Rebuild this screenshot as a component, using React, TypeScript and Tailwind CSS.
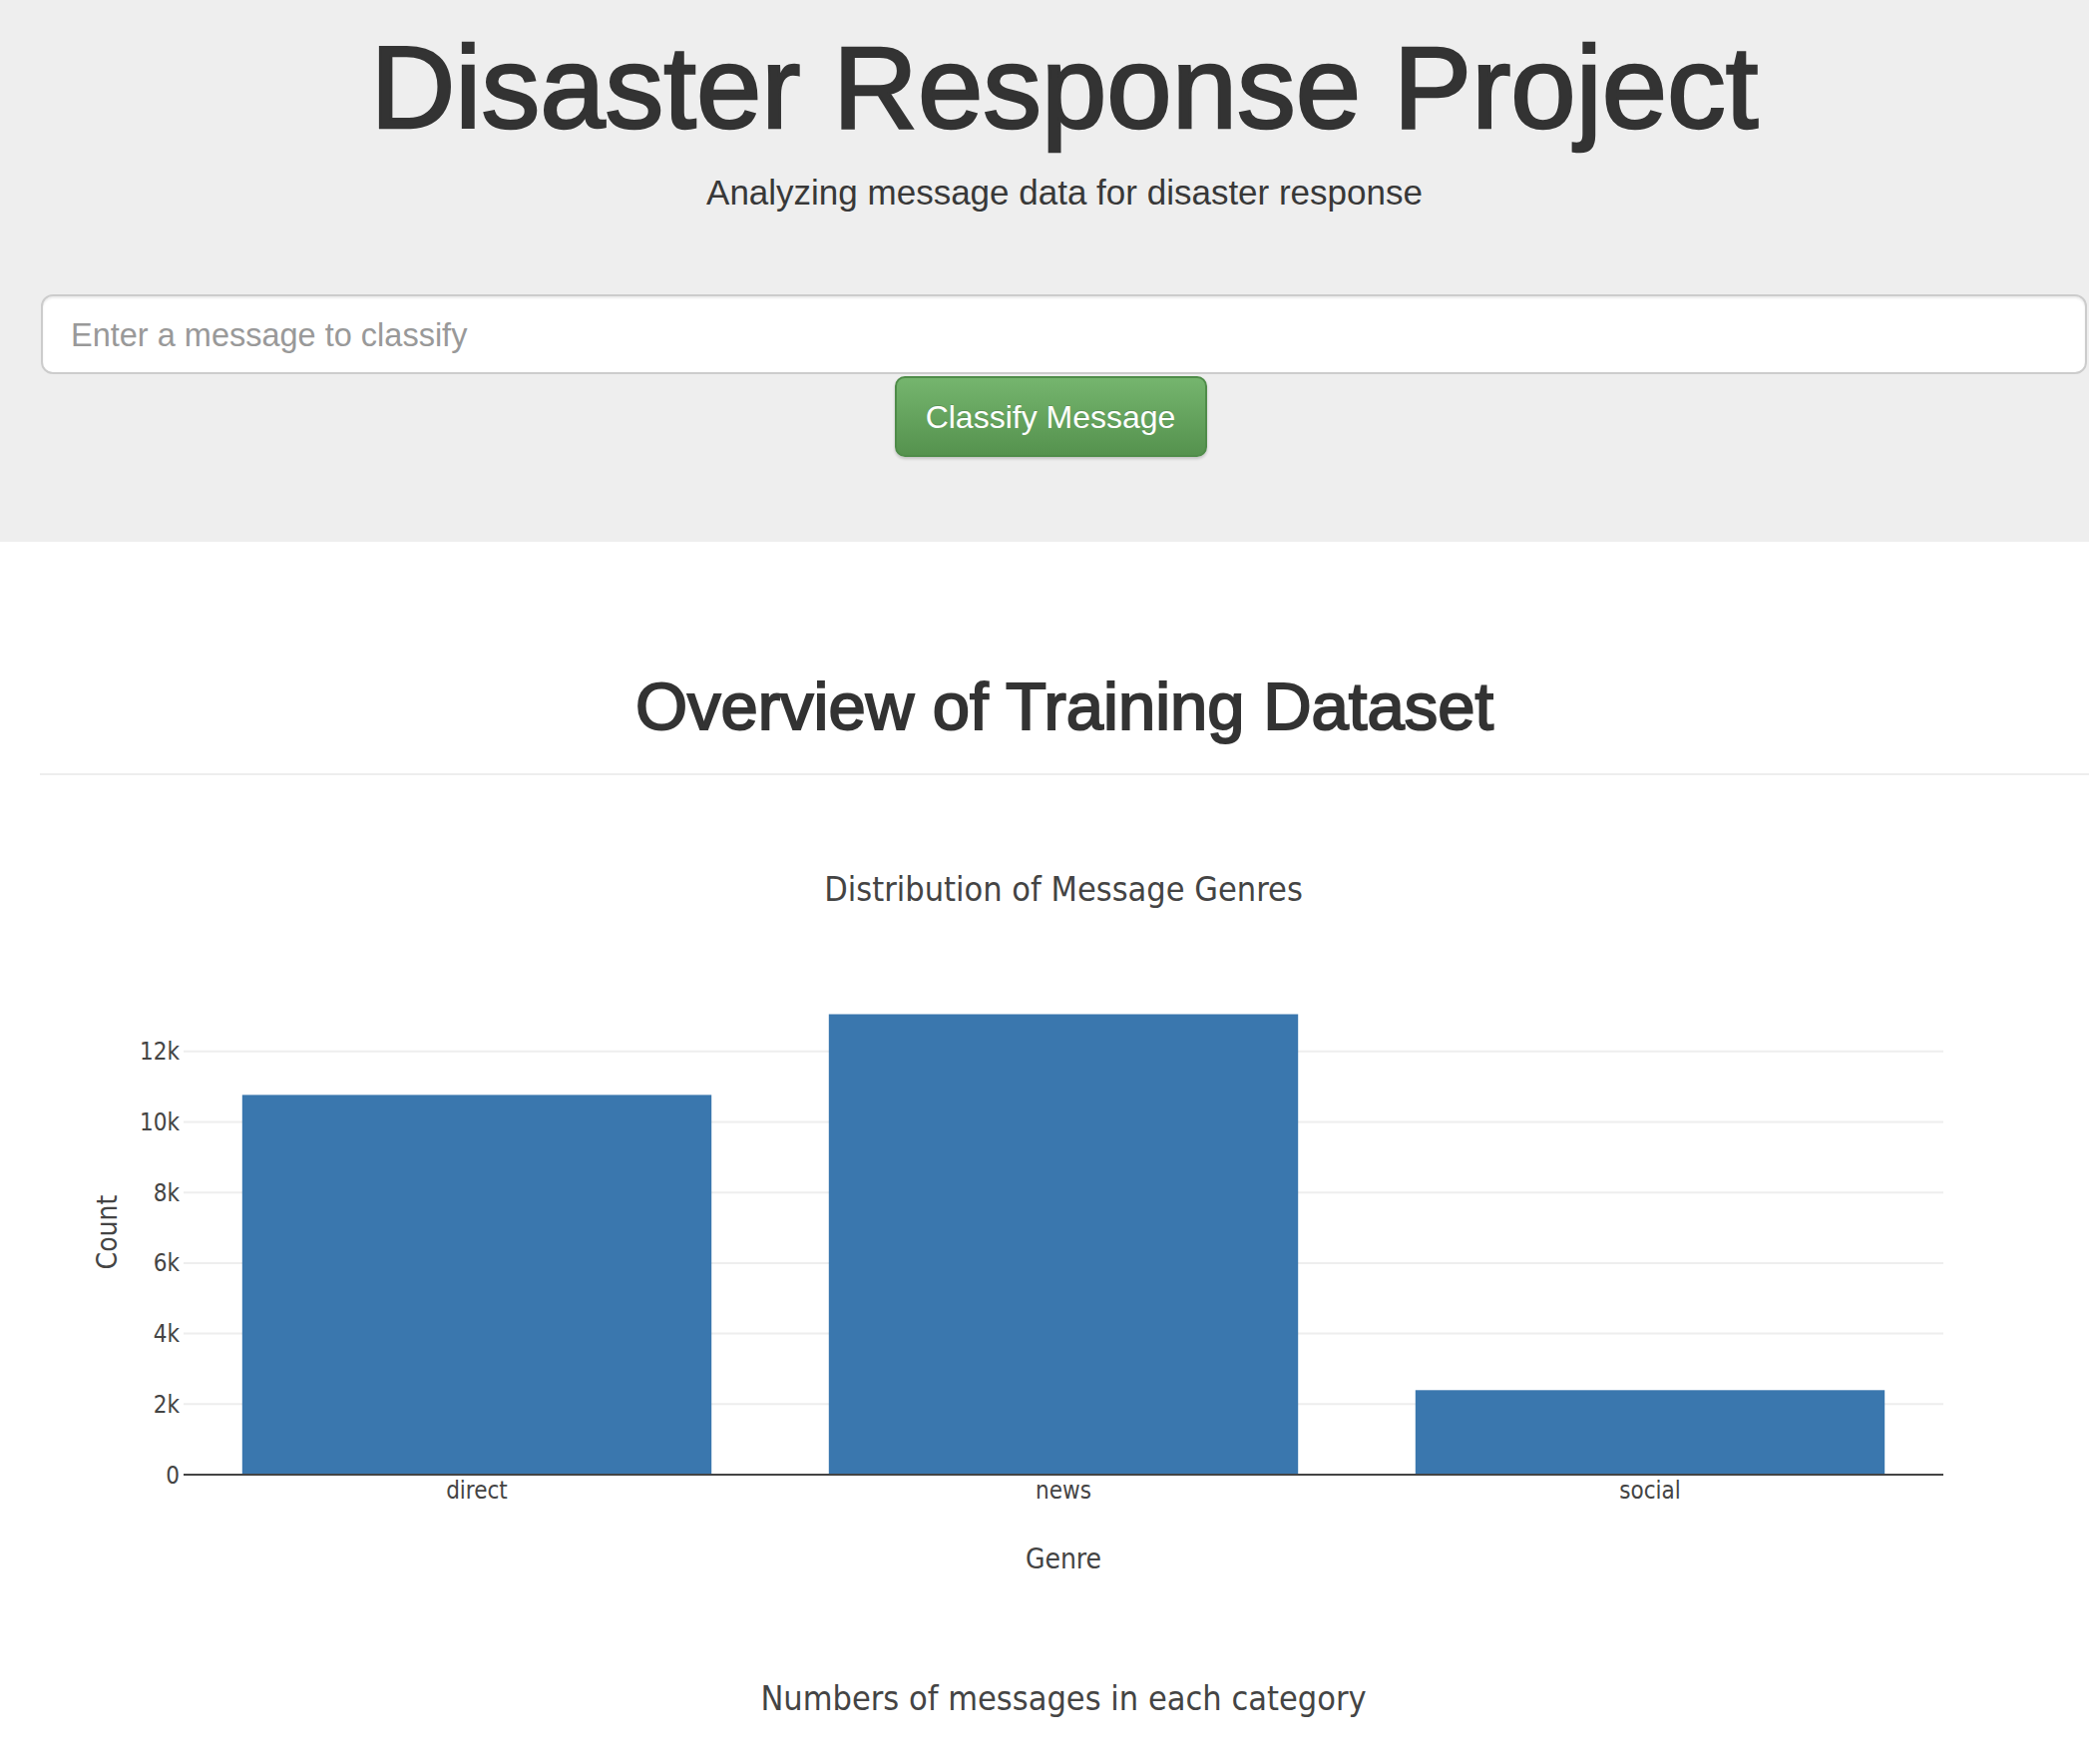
import React from "react";

const CHART_FONT = "'DejaVu Sans Condensed', 'DejaVu Sans', Verdana, sans-serif";

const X0 = 184;
const X1 = 1948;
const ZERO = 1478;
const PER = 0.035353; // px per count

const yOf = (v: number) => ZERO - v * PER;

const bars = [
  { label: "direct", value: 10766 },
  { label: "news", value: 13054 },
  { label: "social", value: 2396 },
];

function GenreChart() {
  const top = 777;
  const cat = (X1 - X0) / 3;
  const bw = cat * 0.8;
  const ticks = [0, 2000, 4000, 6000, 8000, 10000, 12000];
  return (
    <svg width={2094} height={863} viewBox={`0 ${top} 2094 863`} className="block">
      <text x={1066} y={903} textAnchor="middle" fontFamily={CHART_FONT} fontSize={34} fill="#444">
        Distribution of Message Genres
      </text>
      {ticks.slice(1).map((t) => (
        <line key={t} x1={X0} x2={X1} y1={yOf(t)} y2={yOf(t)} stroke="#eeeeee" strokeWidth={2} />
      ))}
      {bars.map((b, i) => {
        const x = X0 + cat * i + (cat - bw) / 2;
        const y = yOf(b.value);
        return <rect key={b.label} x={x} y={y} width={bw} height={ZERO - y} fill="#3a77ae" />;
      })}
      <line x1={X0} x2={X1} y1={ZERO} y2={ZERO} stroke="#444444" strokeWidth={2} />
      {ticks.map((t) => (
        <text key={t} x={180} y={yOf(t) + 8.5} textAnchor="end" fontFamily={CHART_FONT} fontSize={24} fill="#444">
          {t === 0 ? "0" : `${t / 1000}k`}
        </text>
      ))}
      {bars.map((b, i) => (
        <text
          key={b.label}
          x={X0 + cat * i + cat / 2}
          y={1502}
          textAnchor="middle"
          fontFamily={CHART_FONT}
          fontSize={24}
          fill="#444"
        >
          {b.label}
        </text>
      ))}
      <text x={1066} y={1572} textAnchor="middle" fontFamily={CHART_FONT} fontSize={28} fill="#444">
        Genre
      </text>
      <text
        x={0}
        y={0}
        transform="translate(117 1235) rotate(-90)"
        textAnchor="middle"
        fontFamily={CHART_FONT}
        fontSize={28}
        fill="#444"
      >
        Count
      </text>
    </svg>
  );
}

function CategoryChartHead() {
  const top = 1640;
  return (
    <svg width={2094} height={128} viewBox={`0 ${top} 2094 128`} className="block">
      <text x={1066} y={1714} textAnchor="middle" fontFamily={CHART_FONT} fontSize={34} fill="#444">
        Numbers of messages in each category
      </text>
    </svg>
  );
}

export default function App() {
  return (
    <div className="w-[2094px] h-[1768px] overflow-hidden bg-white text-[#333] font-['Liberation_Sans',Arial,sans-serif]">
      <div className="bg-[#eeeeee] h-[543px] pt-[23px] flex flex-col">
        <div className="pl-[40px]">
          <h1 className="text-center text-[117.5px] leading-[130px] font-normal [-webkit-text-stroke:2.5px_#333]">
            Disaster Response Project
          </h1>
          <p className="mt-[20px] text-center text-[35px] leading-[40px] text-[#383838]">
            Analyzing message data for disaster response
          </p>
        </div>
        <div className="mt-[82px] ml-[41px] mr-[2px]">
          <input
            type="text"
            placeholder="Enter a message to classify"
            className="w-full h-[80px] bg-white border-2 border-[#cccccc] rounded-[12px] pl-[28px] pt-[2px] text-[32.5px] text-[#555] placeholder:text-[#999] shadow-[inset_0_2px_2px_rgba(0,0,0,0.075)] outline-none"
          />
        </div>
        <div className="mt-[2px] flex justify-center pl-[40px] pr-[28px]">
          <button
            type="button"
            className="w-[313px] h-[81px] rounded-[10px] border-2 border-[#4f8c49] bg-gradient-to-b from-[#75b56e] to-[#55924e] text-white text-[32px] shadow-[0_2px_3px_rgba(0,0,0,0.18)] [text-shadow:0_-1px_0_rgba(0,0,0,0.15)]"
          >
            Classify Message
          </button>
        </div>
      </div>
      <div className="pl-[40px]">
        <h1 className="mt-[128px] text-center text-[67px] leading-[74px] font-normal [-webkit-text-stroke:2px_#333]">
          Overview of Training Dataset
        </h1>
        <hr className="mt-[30px] border-0 border-t-2 border-[#eeeeee]" />
      </div>
      <GenreChart />
      <CategoryChartHead />
    </div>
  );
}
